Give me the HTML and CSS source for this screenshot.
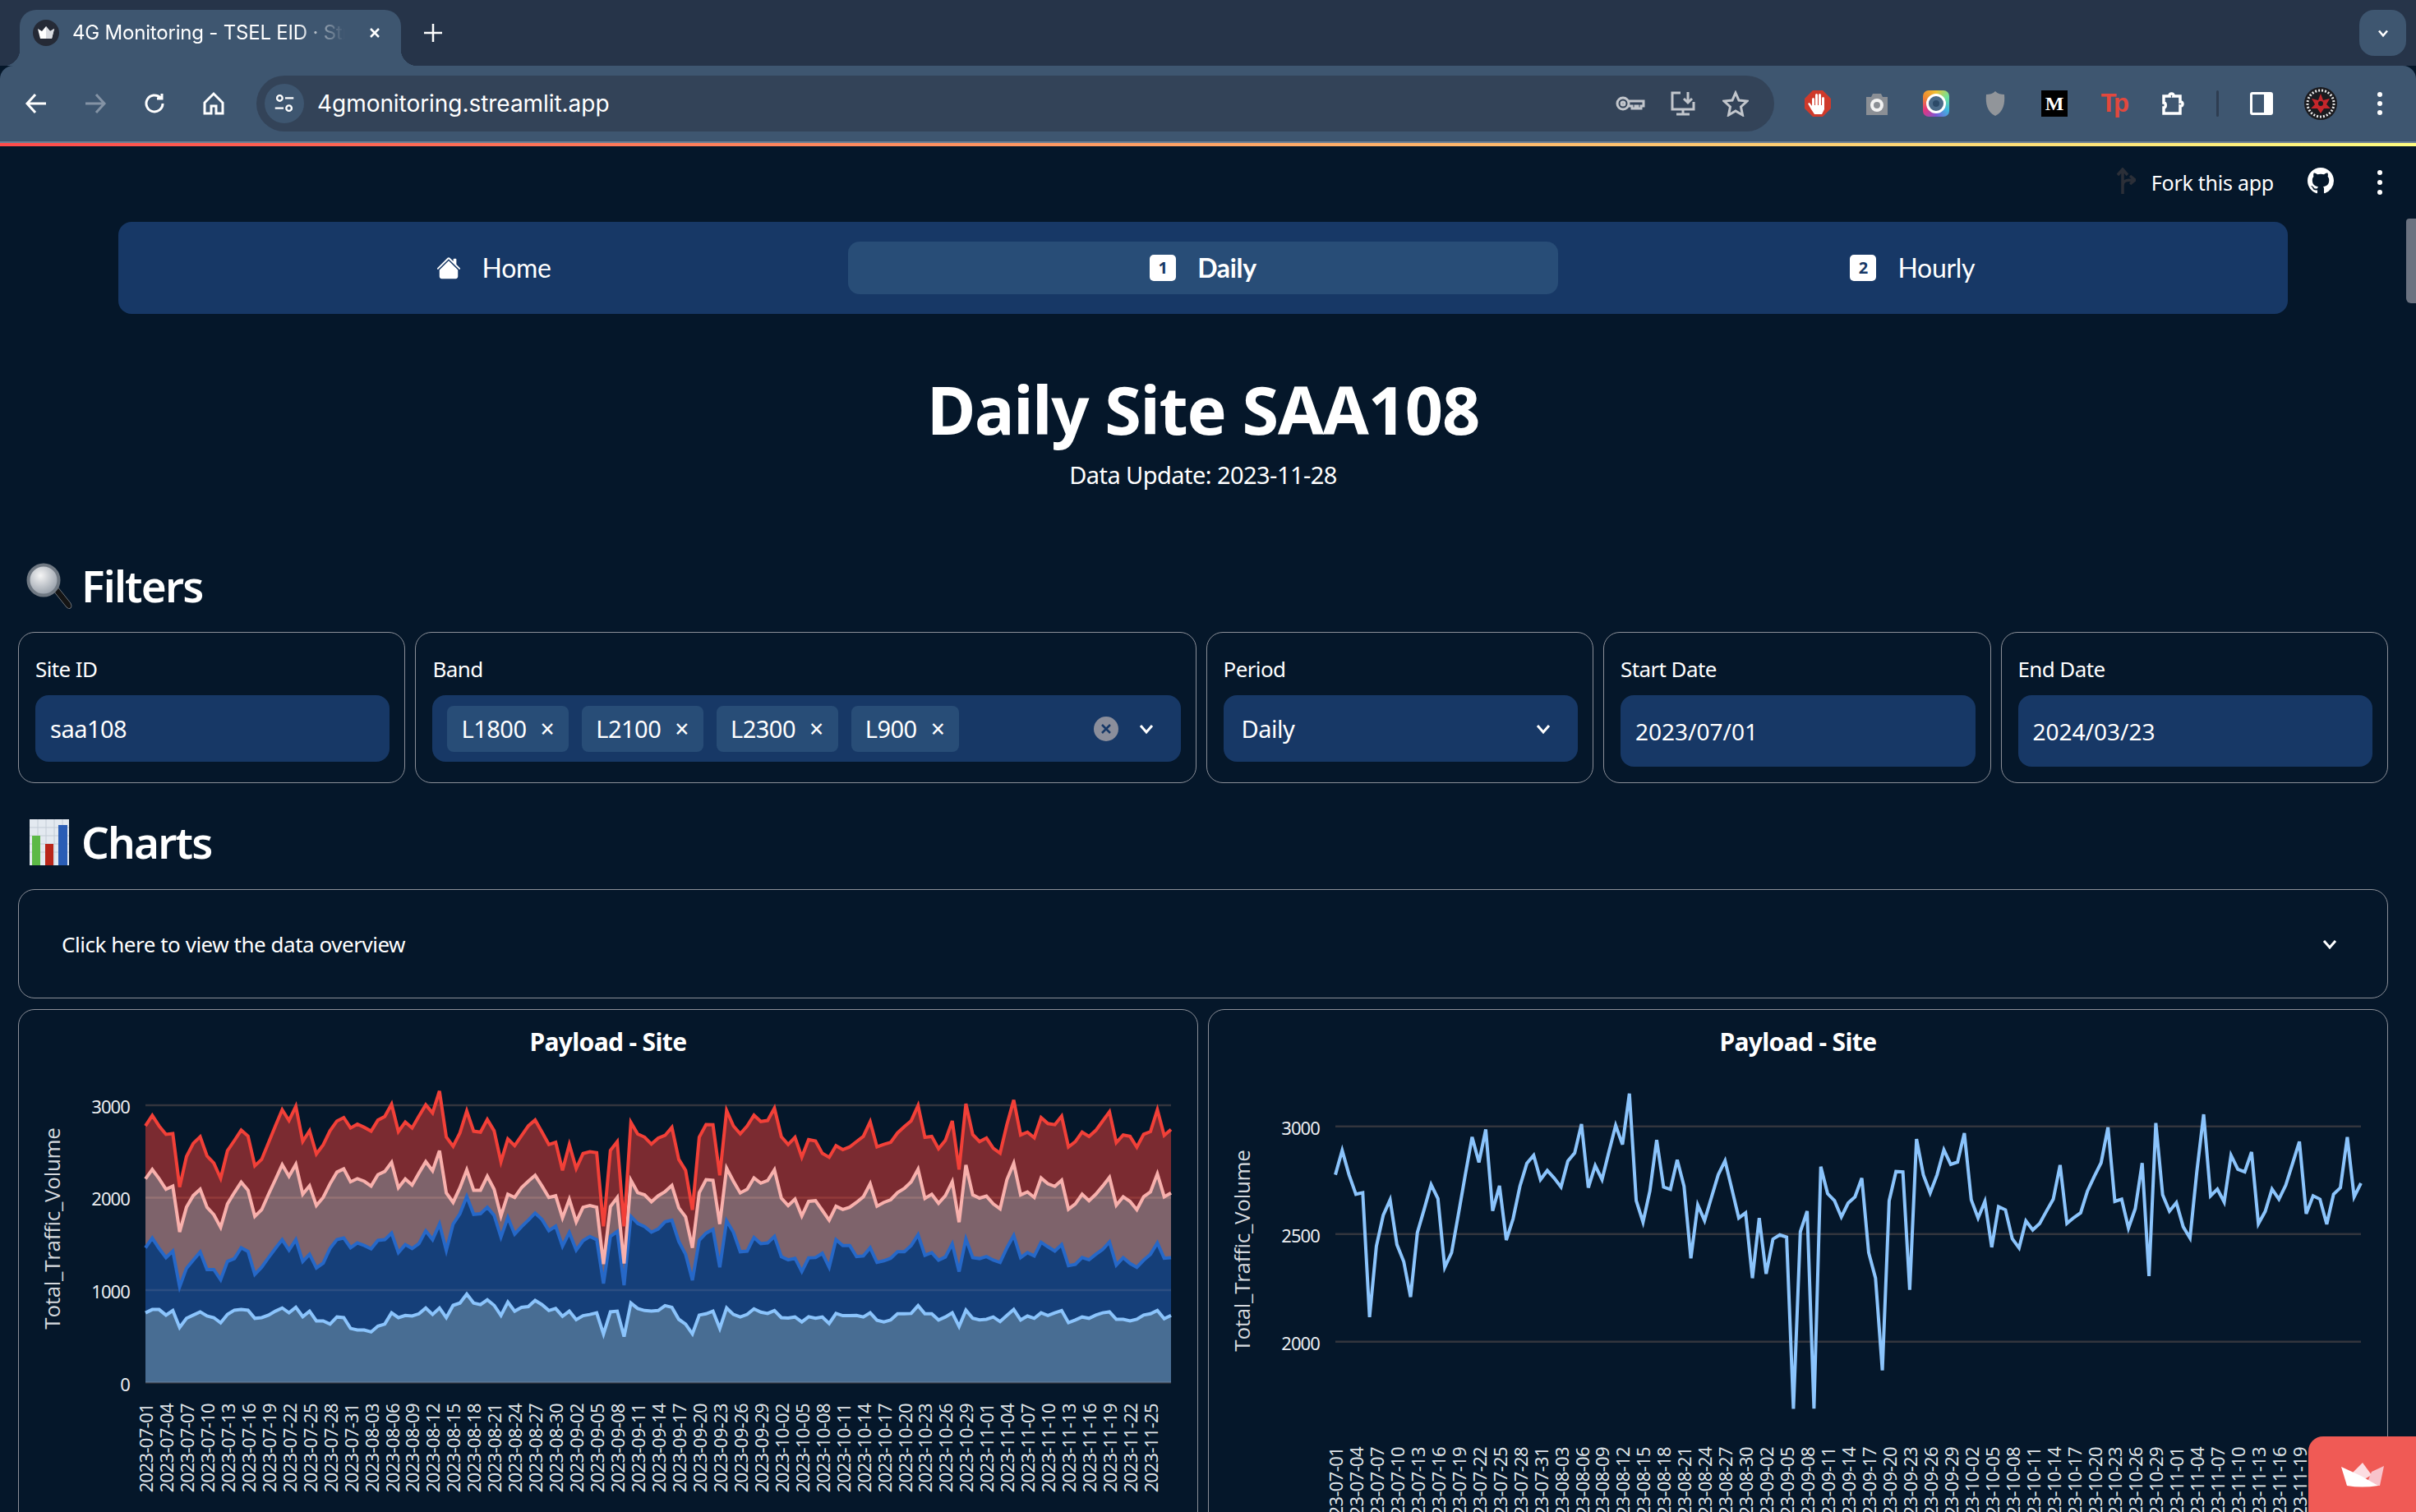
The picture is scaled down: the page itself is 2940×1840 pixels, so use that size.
FILE: index.html
```
<!DOCTYPE html>
<html lang="en">
<head>
<meta charset="utf-8">
<title>4G Monitoring - TSEL EID · Streamlit</title>
<link rel="stylesheet" href="styles.css">
</head>
<body>
<div class="browser">
  <div class="tabstrip">
    <div class="tab">
      <svg class="favicon" viewBox="0 0 32 32"><circle cx="16" cy="16" r="16" fill="#252a36"/><path d="M6 11l5 3 5-6 5 6 5-3-3 12H9z" fill="#fff"/><path d="M16 8l5 6 5-3-3 12h-7z" fill="#d9dbe0"/></svg>
      <span class="tab-title">4G Monitoring - TSEL EID · Streamlit</span>
      <svg class="tab-close" viewBox="0 0 24 24"><path d="M6 6l12 12M18 6L6 18"/></svg>
    </div>
    <svg class="new-tab" viewBox="0 0 24 24"><path d="M12 1v22M1 12h22"/></svg>
    <div class="tab-list"><svg viewBox="0 0 24 24"><path d="M6 9l6 7 6-7"/></svg></div>
  </div>
  <div class="toolbar">
    <div class="tool"><svg class="ico white" viewBox="0 0 32 32"><path d="M28 16H6M15 5L5 16l10 11"/></svg></div>
    <div class="tool"><svg class="ico dim" viewBox="0 0 32 32"><path d="M4 16h22M17 5l10 11-10 11"/></svg></div>
    <div class="tool"><svg class="ico white" viewBox="0 0 32 32"><path d="M26 16a10 10 0 1 1-3-7.2M25 4v6h-6"/></svg></div>
    <div class="tool"><svg class="ico white" viewBox="0 0 32 32"><path d="M5 15L16 4l11 11v13h-8v-9h-6v9H5z"/></svg></div>
    <div class="omnibox">
      <div class="site-info"><svg class="ico white thin" viewBox="0 0 32 32"><circle cx="10" cy="9" r="3.5"/><path d="M17 9h11M4 22h11"/><circle cx="22" cy="22" r="3.5"/></svg></div>
      <span class="url">4gmonitoring.streamlit.app</span>
      <div class="omni-actions">
        <div class="omni-tool"><svg class="ico grey wide" viewBox="0 0 36 20"><circle cx="9" cy="10" r="7"/><circle cx="9" cy="10" r="2"/><path d="M16 7h18v6h-3v3h-4v-3h-3v3h-4v-3h-4"/></svg></div>
        <div class="omni-tool"><svg class="ico grey" viewBox="0 0 32 32"><path d="M13 3H3v20h26V14M8 29h16M16 23v6M22 2v12M17 10l5 5 5-5"/></svg></div>
        <div class="omni-tool"><svg class="ico grey" viewBox="0 0 32 32"><path d="M16 3l4 9 10 1-7.500 7 2 10-8.500-5-8.500 5 2-10L2 13l10-1z"/></svg></div>
      </div>
    </div>
    <div class="ext"><svg class="ext-ico" viewBox="0 0 32 32"><path d="M10 0h12l10 10v12L22 32H10L0 22V10z" fill="#cf3a2b"/><g fill="#fff"><rect x="9" y="9" width="3" height="12" rx="1.500"/><rect x="13" y="4" width="3" height="17" rx="1.500"/><rect x="17" y="4" width="3" height="17" rx="1.500"/><rect x="21" y="8" width="3" height="13" rx="1.500"/><path d="M9 18h15v5l-3 6H12l-4-6-4-7 2-1 3 4z"/></g></svg></div>
    <div class="ext"><svg class="ext-ico" viewBox="0 0 32 32"><path d="M3 8h6l2-4h10l2 4h6v22H3z" fill="#8b8f95"/><circle cx="16" cy="18" r="8" fill="#f2f2f2"/><circle cx="16" cy="18" r="4" fill="#8b8f95"/></svg></div>
    <div class="ext"><span class="lens"><span class="lens-core"></span></span></div>
    <div class="ext"><svg class="ext-ico" viewBox="0 0 32 32"><path d="M16 1c3 3 7 4 11 4 1 11-1 21-11 26C6 26 4 16 5 5c4 0 8-1 11-4z" fill="#91959a"/></svg></div>
    <div class="ext"><span class="medium">M</span></div>
    <div class="ext"><span class="tp">Tp</span></div>
    <div class="ext"><svg class="ico white fat" viewBox="0 0 32 32"><path d="M5 7h7c-1-4 6-4 5 0h8v7c4-1 4 6 0 5v9H5v-7c3 0 3-6 0-6z"/></svg></div>
    <span class="tool-sep"></span>
    <div class="ext"><span class="panel-ico"></span></div>
    <div class="ext"><svg class="avatar" viewBox="0 0 40 40"><circle cx="20" cy="20" r="20" fill="#1b1b1f"/><circle cx="20" cy="20" r="16" fill="none" stroke="#e8e8e8" stroke-width="3" stroke-dasharray="2 2"/><path d="M20 8l3 8 8-2-4 7 5 5-8 0-4 6-4-6-8 0 5-5-4-7 8 2z" fill="#c6262b"/><circle cx="20" cy="20" r="3" fill="#1b1b1f"/></svg></div>
    <div class="ext"><span class="kebab"><i></i><i></i><i></i></span></div>
  </div>
  <div class="accent"></div>
</div>

<div class="app">
  <header class="st-header">
    <svg class="fork" viewBox="0 0 26 32"><path d="M10 32V3M4 9l6-7 6 7M10 22c0-6 4-7 14-7M19 10l6 5-6 5"/></svg>
    <span class="fork-text">Fork this app</span>
    <svg class="github" viewBox="0 0 16 16"><path d="M8 0C3.58 0 0 3.58 0 8c0 3.54 2.29 6.53 5.47 7.59.4.07.55-.17.55-.38 0-.19-.01-.82-.01-1.49-2.01.37-2.53-.49-2.69-.94-.09-.23-.48-.94-.82-1.13-.28-.15-.68-.52-.01-.53.63-.01 1.08.58 1.23.82.72 1.21 1.87.87 2.33.66.07-.52.28-.87.51-1.07-1.78-.2-3.64-.89-3.64-3.95 0-.87.31-1.59.82-2.15-.08-.2-.36-1.02.08-2.12 0 0 .67-.21 2.2.82.64-.18 1.32-.27 2-.27.68 0 1.36.09 2 .27 1.53-1.04 2.2-.82 2.2-.82.44 1.1.16 1.92.08 2.12.51.56.82 1.27.82 2.15 0 3.07-1.87 3.75-3.65 3.95.29.25.54.73.54 1.48 0 1.07-.01 1.93-.01 2.2 0 .21.15.46.55.38A8.013 8.013 0 0016 8c0-4.42-3.58-8-8-8z"/></svg>
    <span class="kebab"><i></i><i></i><i></i></span>
  </header>

  <main class="content">
    <nav class="pages">
      <a class="page"><svg class="page-home" viewBox="0 0 16 16"><path d="M8.707 1.500a1 1 0 0 0-1.414 0L.646 8.146a.5.5 0 0 0 .708.708L8 2.207l6.646 6.647a.5.5 0 0 0 .708-.708L13 5.793V2.500a.5.5 0 0 0-.5-.5h-1a.5.5 0 0 0-.5.5v1.293L8.707 1.500z"/><path d="M8 3.293l6 6V13.500a1.500 1.500 0 0 1-1.500 1.500h-9A1.500 1.500 0 0 1 2 13.500V9.293l6-6z"/></svg>Home</a>
      <a class="page active"><span class="page-num">1</span>Daily</a>
      <a class="page"><span class="page-num">2</span>Hourly</a>
    </nav>

    <h1 class="title">Daily Site SAA108</h1>
    <p class="update">Data Update: 2023-11-28</p>

    <h2 class="section first">
      <svg class="emoji" viewBox="0 0 56 56">
        <defs><radialGradient id="glass" cx=".4" cy=".35" r=".7"><stop offset="0" stop-color="#f5f5f5"/><stop offset="1" stop-color="#8f98a3"/></radialGradient></defs>
        <path d="M33 34l5-5 16 20q2 4 0 6t-5-1z" fill="#141414" stroke="#6b7178" stroke-width="1"/>
        <circle cx="21" cy="21" r="18.500" fill="url(#glass)" stroke="#6f7882" stroke-width="4"/>
      </svg>Filters
    </h2>
    <section class="filters">
      <div class="field">
        <label class="field-label">Site ID</label>
        <div class="control">saa108</div>
      </div>
      <div class="field">
        <label class="field-label">Band</label>
        <div class="control multi">
          <span class="chip">L1800<b class="chip-x">×</b></span>
          <span class="chip">L2100<b class="chip-x">×</b></span>
          <span class="chip">L2300<b class="chip-x">×</b></span>
          <span class="chip">L900<b class="chip-x">×</b></span>
          <span class="clear"><svg viewBox="0 0 30 30"><circle cx="15" cy="15" r="15" fill="#8b8e9b"/><path d="M10 10l10 10M20 10L10 20" stroke="#173866" stroke-width="2.500"/></svg></span>
          <svg class="chev" viewBox="0 0 24 24"><path d="M5 8l7 8 7-8"/></svg>
        </div>
      </div>
      <div class="field">
        <label class="field-label">Period</label>
        <div class="control select">Daily<svg class="chev" viewBox="0 0 24 24"><path d="M5 8l7 8 7-8"/></svg></div>
      </div>
      <div class="field">
        <label class="field-label">Start Date</label>
        <div class="control date">2023/07/01</div>
      </div>
      <div class="field">
        <label class="field-label">End Date</label>
        <div class="control date">2024/03/23</div>
      </div>
    </section>

    <h2 class="section second">
      <svg class="emoji bars" viewBox="0 0 48 56">
        <rect width="48" height="56" fill="#e3e9f0"/>
        <path d="M0 10h48M0 20h48M0 30h48M0 40h48M10 0v56M20 0v56M30 0v56M40 0v56" stroke="#c3ccd6" stroke-width="1"/>
        <rect x="3" y="20" width="10" height="36" fill="#5cb946"/>
        <rect x="19" y="30" width="10" height="26" fill="#b9261a"/>
        <rect x="35" y="7" width="11" height="49" fill="#2a5db5"/>
      </svg>Charts
    </h2>
    <div class="expander">
      <span>Click here to view the data overview</span>
      <svg class="chev" viewBox="0 0 24 24"><path d="M5 8l7 8 7-8"/></svg>
    </div>

    <section class="charts">
      <article class="chart-card">
        <h3 class="chart-title">Payload - Site</h3>
        <svg class="chart" id="chart-area"></svg>
      </article>
      <article class="chart-card">
        <h3 class="chart-title">Payload - Site</h3>
        <svg class="chart" id="chart-line"></svg>
      </article>
    </section>
  </main>
  <div class="scroll-thumb"></div>
  <a class="badge"><svg viewBox="0 0 52 30"><path d="M14 12L26 0l11 15-12 7z" fill="#fcdde1"/><path d="M37 11l15-7-5 24H30z" fill="#f8c3cb"/><path d="M0 5l24 11 21 12q-20 3-38 0z" fill="#fff"/></svg></a>
</div>
<script src="chart.js"></script>
</body>
</html>
```
FILE: styles.css
```
* { box-sizing: border-box; }
html, body { margin: 0; height: 1840px; overflow: hidden; }
body { background: #05172a; color: #fff; font-family: "Noto Sans", "Liberation Sans", sans-serif; }

/* browser chrome */
.browser { font-family: Inter, "Noto Sans", sans-serif; }
.tabstrip { height: 80px; background: #263449; display: flex; align-items: flex-start; padding-top: 12px; }
.tab { position: relative; margin-left: 24px; width: 464px; height: 68px; background: #3e5670; border-radius: 20px 20px 0 0; display: flex; align-items: flex-start; padding: 12px 0 0 16px; }
.tab::before, .tab::after { content: ""; position: absolute; bottom: 0; width: 20px; height: 20px; }
.tab::before { left: -20px; background: radial-gradient(circle at 0 0, transparent 20px, #3e5670 20.5px); }
.tab::after { right: -20px; background: radial-gradient(circle at 100% 0, transparent 20px, #3e5670 20.5px); }
.favicon { width: 32px; height: 32px; flex: none; }
.tab-title { width: 332px; margin-left: 16px; font-size: 24px; line-height: 32px; letter-spacing: -.2px; white-space: nowrap; overflow: hidden; -webkit-mask-image: linear-gradient(90deg, #000 82%, transparent 100%); mask-image: linear-gradient(90deg, #000 82%, transparent 100%); }
.tab-close { width: 20px; height: 20px; margin: 6px 0 0 26px; fill: none; stroke: #fff; stroke-width: 3; }
.new-tab { width: 24px; height: 24px; margin: 16px 0 0 27px; fill: none; stroke: #fff; stroke-width: 2.5; }
.tab-list { margin-left: auto; margin-right: 12px; width: 57px; height: 56px; background: #3e5670; border-radius: 18px; display: flex; align-items: center; justify-content: center; }
.tab-list svg { width: 20px; height: 20px; fill: none; stroke: #fff; stroke-width: 3; }
.toolbar { height: 92px; background: #3e5670; border-radius: 16px 16px 0 0; display: flex; align-items: center; padding: 0 8px; }
.tool { width: 72px; display: flex; justify-content: center; }
.ico { width: 32px; height: 32px; fill: none; stroke-width: 3; }
.white { stroke: #fff; }
.dim { stroke: #8493a5; }
.grey { stroke: #c2c6cc; }
.thin { stroke-width: 2.5; }
.wide { width: 36px; height: 20px; }
.fat { stroke-width: 3.5; }
.omnibox { margin: 0 17px 0 16px; width: 1847px; height: 68px; border-radius: 34px; background: #334358; display: flex; align-items: center; padding-left: 10px; }
.site-info { width: 48px; height: 48px; border-radius: 24px; background: #3e5670; display: flex; align-items: center; justify-content: center; }
.site-info .ico { width: 30px; height: 30px; }
.url { margin-left: 16px; font-size: 28px; letter-spacing: -.05px; }
.omni-actions { margin-left: auto; padding-right: 15px; display: flex; }
.omni-tool { width: 64px; display: flex; justify-content: center; align-items: center; }
.ext { width: 72px; display: flex; justify-content: center; align-items: center; }
.ext-ico { width: 32px; height: 32px; }
.lens { width: 32px; height: 32px; border-radius: 7px; background: conic-gradient(#f1c232, #6ee29b, #3fb6e0, #7a56d6, #e2367f, #f08a30, #f1c232); display: flex; align-items: center; justify-content: center; }
.lens-core { width: 24px; height: 24px; border-radius: 50%; background: #2c4a68; border: 3px solid #fff; box-shadow: inset 0 0 0 5px #4a6a88; }
.medium { width: 32px; height: 32px; background: #000; font: bold 24px/32px "Liberation Serif", serif; text-align: center; }
.tp { font: bold 31px/32px "Liberation Sans", sans-serif; letter-spacing: -3.5px; color: #e2483d; }
.tool-sep { width: 3px; height: 32px; margin: 0 16px 0 17px; background: #2e3d51; border-radius: 2px; }
.panel-ico { width: 28px; height: 28px; border: 3px solid #fff; border-right-width: 11px; border-radius: 3px; background: #3e5670; }
.avatar { width: 40px; height: 40px; }
.kebab { display: flex; flex-direction: column; align-items: center; gap: 5px; }
.kebab i { width: 6px; height: 6px; border-radius: 50%; background: #fff; }
.accent { height: 6px; border-top: 2px solid #6b7f95; background: linear-gradient(90deg, #ff4b4b, #fffd80); }

/* app */
.app { position: relative; height: 1662px; overflow: hidden; }
.st-header { height: 92px; display: flex; align-items: flex-start; padding: 26px 41px 0 0; justify-content: flex-end; }
.fork { width: 26px; height: 32px; fill: none; stroke: #2b2f38; stroke-width: 3.5; margin-right: 19px; }
.fork-text { font-size: 25px; line-height: 36px; letter-spacing: -.25px; margin-right: 41px; }
.github { width: 32px; height: 32px; fill: #fff; margin-right: 53px; }
.st-header .kebab { width: 6px; margin-top: 3px; gap: 6px; }
.content { padding: 0 34px 0 22px; }

.pages { margin: 0 122px; height: 112px; padding: 24px 25px; background: #173866; border-radius: 16px; display: grid; grid-template-columns: repeat(3, 1fr); }
.page { display: flex; align-items: center; justify-content: center; font: 400 32px/1 Lato, "Noto Sans", sans-serif; letter-spacing: -.3px; border-radius: 14px; }
.page.active { background: #284d77; font-weight: 700; }
.page-home { width: 30px; height: 30px; fill: #fff; margin-right: 26px; }
.page-num { width: 32px; height: 32px; margin-right: 26px; background: #fff; border-radius: 5px; color: #173866; font: 700 20px/32px "Noto Sans", sans-serif; text-align: center; }

.title { margin: 66px 0 0; text-align: center; font-size: 81px; line-height: 100px; font-weight: 700; letter-spacing: -1.2px; }
.update { margin: 10px 0 0; text-align: center; font-size: 29px; line-height: 40px; letter-spacing: -.55px; }
.section { display: flex; align-items: center; margin: 0; font-size: 53px; line-height: 70px; font-weight: 600; letter-spacing: -1.8px; }
.section.first { margin-top: 80px; }
.section.second { margin-top: 37px; }
.emoji { width: 56px; height: 56px; margin: 0 11px 0 10px; flex: none; }
.emoji.bars { width: 48px; margin: 0 15px 0 14px; }

.filters { margin-top: 21px; display: grid; grid-template-columns: 1fr 2.015fr 1fr 1fr 1fr; gap: 12px; }
.field { border: 1px solid #8b8f98; border-radius: 20px; padding: 26px 18px 19px 20px; }
.field-label { display: block; font-size: 26px; line-height: 36px; letter-spacing: -.6px; }
.control { margin-top: 14px; height: 81px; background: #173866; border-radius: 16px; display: flex; align-items: center; padding-left: 18px; font-size: 29px; letter-spacing: -.5px; }
.control.select { padding: 0 30px 0 22px; justify-content: space-between; }
.control.date { height: 87px; font-size: 28px; letter-spacing: 0; }
.control.multi { gap: 16px; padding: 0 30px 0 18px; }
.chip { height: 56px; padding: 0 18px 0 17px; background: #284d77; border-radius: 8px; display: flex; align-items: center; gap: 17px; }
.chip-x { font-weight: 400; font-size: 30px; line-height: 1; }
.clear { margin-left: auto; margin-right: 6px; width: 30px; height: 30px; }
.clear svg { display: block; width: 30px; height: 30px; }
.chev { width: 24px; height: 24px; fill: none; stroke: #fff; stroke-width: 3; flex: none; }

.expander { margin-top: 22px; height: 133px; border: 1px solid #8b8f98; border-radius: 20px; padding: 0 58px 0 52px; display: flex; align-items: center; justify-content: space-between; font-size: 26px; letter-spacing: -.47px; }

.charts { margin-top: 13px; display: grid; grid-template-columns: 1fr 1fr; gap: 12px; }
.chart-card { border: 1px solid #8b8f98; border-radius: 20px; height: 700px; }
.chart-title { margin: 0; height: 71px; padding-top: 17px; text-align: center; font-size: 30px; line-height: 44px; font-weight: 700; letter-spacing: -.65px; }
.chart { display: block; width: 100%; height: 628px; }
.grid-line { stroke: #33353d; stroke-width: 2.5; }
.y-tick { fill: #eceef1; font-size: 22px; letter-spacing: -.9px; text-anchor: end; dominant-baseline: central; }
.x-tick { fill: #dfe3e8; font-size: 22px; letter-spacing: -.65px; text-anchor: end; dominant-baseline: central; }
.y-title { fill: #d5d9de; font-family: "Open Sans", sans-serif; font-size: 26px; text-anchor: middle; dominant-baseline: central; letter-spacing: -.3px; }
.c-light { stroke: #8bc4fc; fill: #8bc4fc; }
.c-blue { stroke: #2668c8; fill: #2668c8; }
.c-pink { stroke: #f8b0ac; fill: #f8b0ac; }
.c-red { stroke: #f24038; fill: #f24038; }
.line { fill: none; stroke-width: 4; }
.area { fill-opacity: .5; stroke: none; }

.scroll-thumb { position: absolute; top: 88px; right: 0; width: 12px; height: 103px; background: #6b7280; border-radius: 4px 0 0 6px; }
.badge { position: absolute; right: 0; bottom: 0; width: 131px; height: 92px; background: #f05a55; border-radius: 18px 0 0 0; display: flex; justify-content: center; padding-top: 32px; }
.badge svg { width: 52px; height: 30px; }
```
FILE: chart.js
```
// Daily traffic per band, stacked. Traced readings on the reference scale.
var total = [530,455,530,590,585,968,750,655,607,745,797,906,708,635,560,603,815,770,650,530,414,492,390,641,564,731,665,565,495,470,545,517,540,568,488,463,374,570,502,545,460,378,437,280,610,676,580,423,568,575,484,565,787,623,671,600,530,487,575,663,647,848,663,835,728,715,722,1250,705,642,1250,505,588,610,660,617,598,540,770,848,1132,610,520,521,884,420,530,586,530,453,498,491,402,607,663,612,753,628,638,727,755,672,700,680,642,605,500,680,662,647,580,535,493,384,612,605,694,634,494,842,371,592,642,616,690,725,520,344,595,574,614,470,513,521,460,681,643,574,605,562,495,428,650,595,605,682,590,570,414,598,556];
var pink = [543,514,542,575,565,706,630,594,575,630,653,692,620,585,553,578,658,638,590,545,499,535,498,590,564,625,600,558,522,512,552,542,550,565,530,520,492,570,543,562,525,490,518,456,586,615,570,515,578,578,535,575,657,590,600,570,550,532,565,600,595,663,606,675,630,625,630,805,628,600,803,547,585,592,613,595,582,563,632,660,755,585,545,547,682,510,550,586,575,540,556,548,515,602,625,605,657,612,610,640,670,627,637,630,615,598,558,627,615,607,585,572,552,513,603,590,618,595,552,676,500,592,602,596,620,635,545,495,592,583,600,540,558,566,547,636,620,590,610,590,565,538,624,598,612,638,598,583,527,598,586];
var blue = [755,725,757,785,765,875,818,793,768,822,822,853,797,788,755,766,837,815,785,757,730,762,730,797,775,817,802,757,730,725,755,740,748,758,732,730,710,770,745,757,742,703,730,682,763,682,650,597,652,650,630,655,722,662,713,690,670,648,668,702,688,750,708,762,733,720,730,865,720,705,870,658,680,690,707,697,675,670,735,775,855,732,710,698,815,672,707,767,765,723,742,740,720,782,792,787,828,786,785,772,815,730,748,748,782,780,755,800,795,787,767,767,748,715,778,770,793,783,743,828,728,785,788,782,793,800,755,717,785,770,780,738,752,765,745,810,806,785,792,775,760,737,808,785,803,815,793,775,740,787,785];
var light = [955,945,945,962,948,1000,972,962,952,965,970,986,960,947,945,947,972,970,962,950,940,955,938,967,950,980,980,990,968,970,1003,1008,1008,1014,996,990,955,970,963,965,958,940,960,940,970,932,925,897,925,930,915,932,963,922,950,938,936,917,930,948,942,966,950,976,964,960,955,1020,952,950,1028,925,942,948,950,948,933,938,975,990,1020,962,958,950,1003,940,960,968,960,943,953,957,948,970,971,968,983,967,972,968,988,957,964,964,963,968,955,978,983,977,958,958,957,933,958,958,977,968,955,997,947,972,977,975,968,982,963,945,977,965,972,955,963,955,948,985,977,968,972,962,955,952,975,975,980,975,962,958,948,973,963];

var SVG_NS = "http://www.w3.org/2000/svg";
var CHART_TOP = 1300;      // page y of the svg box
var PLOT_X = 154, STEP = 8.32, COUNT = 151;

// A trace reading -> value, and a value -> svg y for each chart.
function stackedValue(r) { return (1170 - r) / 0.2847; }
function totalValue(r) { return 3000 - (r - 381) / 0.663; }
function areaY(v) { return 1682.6 - v * 0.11257 - CHART_TOP; }
function lineY(v) { return 1370.7 + (3000 - v) * 0.26216 - CHART_TOP; }
function plotX(i) { return PLOT_X + i * STEP; }

function el(parent, name, attrs, text) {
  var node = document.createElementNS(SVG_NS, name);
  for (var k in attrs) node.setAttribute(k, attrs[k]);
  if (text !== undefined) node.textContent = text;
  parent.appendChild(node);
  return node;
}
function pts(values, toY) {
  return values.map(function (v, i) { return plotX(i).toFixed(1) + "," + toY(v).toFixed(1); });
}
function axes(svg, ticks, toY, titleY, xTickTop) {
  ticks.forEach(function (t) {
    var y = toY(t);
    el(svg, "line", { "class": "grid-line", x1: PLOT_X, x2: PLOT_X + 150 * STEP, y1: y, y2: y });
    el(svg, "text", { "class": "y-tick", x: 135, y: y + 1 }, String(t));
  });
  el(svg, "text", { "class": "y-title", x: 40, y: titleY, transform: "rotate(-90 40 " + titleY + ")" }, "Total_Traffic_Volume");
  for (var i = 0; i < COUNT - 3; i += 3) {
    var d = new Date(Date.UTC(2023, 6, 1 + i));
    var label = d.toISOString().slice(0, 10);
    var x = plotX(i);
    el(svg, "text", { "class": "x-tick", x: x, y: xTickTop, transform: "rotate(-90 " + x + " " + xTickTop + ")" }, label);
  }
}

var totals = total.map(totalValue);
var stacks = [
  { cls: "c-light", v: light.map(stackedValue) },
  { cls: "c-blue", v: blue.map(stackedValue) },
  { cls: "c-pink", v: pink.map(stackedValue) },
  { cls: "c-red", v: totals }
];

var areaSvg = document.getElementById("chart-area");
axes(areaSvg, [0, 1000, 2000, 3000], areaY, 195, 408);
stacks.forEach(function (s, idx) {
  var top = pts(s.v, areaY);
  var bottom = idx === 0
    ? [plotX(150).toFixed(1) + "," + areaY(0).toFixed(1), plotX(0).toFixed(1) + "," + areaY(0).toFixed(1)]
    : pts(stacks[idx - 1].v, areaY).reverse();
  el(areaSvg, "polygon", { "class": "area " + s.cls, points: top.concat(bottom).join(" ") });
});
stacks.forEach(function (s) {
  el(areaSvg, "polyline", { "class": "line " + s.cls, points: pts(s.v, areaY).join(" ") });
});

var lineSvg = document.getElementById("chart-line");
axes(lineSvg, [2000, 2500, 3000], lineY, 222, 461);
el(lineSvg, "polyline", { "class": "line c-light", points: pts(totals, lineY).join(" ") });
```
